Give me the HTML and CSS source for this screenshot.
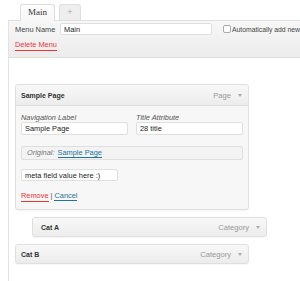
FILE: index.html
```html
<!DOCTYPE html>
<html>
<head>
    <title>Menus</title>
    <link rel="stylesheet" href="styles.css">
</head>
<body>
<div class="tabs">
    <div class="tab tab-active">Main</div>
    <div class="tab tab-add">+</div>
</div>
<div class="frame">
    <div class="frame-head">
        <div class="name-row">
            <span class="name-label">Menu Name</span>
            <div class="field name-field">Main</div>
            <span class="check"></span>
            <span class="auto-label">Automatically add new</span>
        </div>
        <div class="delete-row">
            <span class="link-red">Delete Menu</span>
        </div>
    </div>
    <div class="frame-body">
        <div class="item">
            <div class="item-bar">
                <span class="item-title">Sample Page</span>
                <span class="item-type">Page</span>
                <span class="arrow"></span>
            </div>
            <div class="item-settings">
                <div class="two-col">
                    <div class="col">
                        <div class="label">Navigation Label</div>
                        <div class="field wide">Sample Page</div>
                    </div>
                    <div class="col">
                        <div class="label">Title Attribute</div>
                        <div class="field wide">28 title</div>
                    </div>
                </div>
                <div class="original">
                    <span class="label">Original:</span>
                    <span class="link-blue">Sample Page</span>
                </div>
                <div class="field meta">meta field value here :)</div>
                <div class="actions">
                    <span class="link-red">Remove</span>
                    <span class="sep">|</span>
                    <span class="link-blue">Cancel</span>
                </div>
            </div>
        </div>
        <div class="item item-bar sub">
            <span class="item-title">Cat A</span>
            <span class="item-type">Category</span>
            <span class="arrow"></span>
        </div>
        <div class="item item-bar">
            <span class="item-title">Cat B</span>
            <span class="item-type">Category</span>
            <span class="arrow"></span>
        </div>
    </div>
</div>
</body>
</html>
```

FILE: styles.css
```css
body {
margin: 0;
background: #fff;
font-family: "Liberation Sans", Arial, sans-serif;
font-size: 7.4px;
color: #333;
overflow: hidden;
}

.tabs {
display: flex;
gap: 4px;
padding: 4px 0 0 20px;
height: 16px;
position: relative;
z-index: 1;
}
.tab {
box-sizing: border-box;
height: 17px;
border: 1px solid #dfdfdf;
border-bottom: none;
border-radius: 3px 3px 0 0;
font-family: "Liberation Serif", serif;
font-size: 9px;
line-height: 15px;
text-align: center;
}
.tab-active {
width: 35px;
background: linear-gradient(#fdfdfd, #f7f7f7);
color: #333;
}
.tab-add {
width: 22px;
height: 16px;
background: #eeeeee;
color: #aaa;
font-family: "Liberation Sans", sans-serif;
font-size: 9px;
}

.frame {
margin-left: 8px;
border-left: 1px solid #e3e3e3;
min-height: 261px;
}
.frame-head {
height: 36px;
border-top: 1px solid #dfdfdf;
border-bottom: 1px solid #dfdfdf;
background: linear-gradient(#f7f7f7, #ececec);
padding-left: 6px;
white-space: nowrap;
overflow: hidden;
}
.name-row {
display: flex;
align-items: center;
height: 12px;
margin-top: 2px;
}
.name-row > * {
flex-shrink: 0;
}
.name-label {
width: 45px;
color: #444;
}
.field {
box-sizing: border-box;
background: #fff;
border: 1px solid #dfdfdf;
border-radius: 2px;
padding-left: 3px;
color: #222;
display: flex;
align-items: center;
}
.name-field {
width: 152px;
height: 12px;
}
.check {
box-sizing: border-box;
width: 8px;
height: 8px;
border: 1px solid #aaa;
border-radius: 2px;
background: #fff;
margin-left: 11px;
margin-right: 1px;
}
.auto-label {
color: #444;
font-size: 6.8px;
}
.delete-row {
margin-top: 5px;
height: 12px;
}
.link-red {
color: #e33;
border-bottom: 1px solid #e33;
padding-bottom: 1px;
}
.link-blue {
color: #21759b;
border-bottom: 1px solid #21759b;
}

.frame-body {
padding: 26px 0 0 6px;
}
.item {
box-sizing: border-box;
width: 234px;
border: 1px solid #dfdfdf;
border-radius: 3px;
background: #f7f7f7;
box-shadow: 0 1px 1px rgba(0, 0, 0, 0.04);
margin-bottom: 7px;
}
.item-bar {
display: flex;
align-items: center;
height: 20px;
padding: 0 6px 0 5px;
background: linear-gradient(#f8f8f8, #ececec);
border-radius: 3px 3px 0 0;
}
.item > .item-bar {
height: 20px;
border-bottom: 1px solid #dfdfdf;
}
.item.item-bar {
height: 20px;
border-radius: 3px;
}
.item-title {
font-weight: bold;
font-size: 7px;
color: #333;
flex: 1;
}
.item-type {
color: #999;
font-size: 7.6px;
margin-right: 7px;
}
.arrow {
width: 0;
height: 0;
border-left: 2.5px solid transparent;
border-right: 2.5px solid transparent;
border-top: 3px solid #aaa;
}
.sub {
margin-left: 17px;
width: 235px;
padding-left: 8px;
}

.item-settings {
padding: 8px 5px 6px 5px;
}
.two-col {
display: flex;
gap: 8px;
}
.col {
width: 107px;
}
.label {
font-style: italic;
color: #555;
line-height: 8px;
}
.wide {
height: 13px;
}
.original {
box-sizing: border-box;
margin-top: 11px;
height: 14px;
border: 1px solid #dfdfdf;
border-radius: 2px;
background: #f3f3f3;
padding-left: 5px;
display: flex;
align-items: center;
gap: 3px;
}
.original .label {
color: #777;
}
.meta {
margin-top: 9px;
width: 97px;
height: 12px;
}
.actions {
margin-top: 10px;
height: 12px;
display: flex;
align-items: flex-start;
gap: 2px;
}
.sep {
color: #555;
}
```
